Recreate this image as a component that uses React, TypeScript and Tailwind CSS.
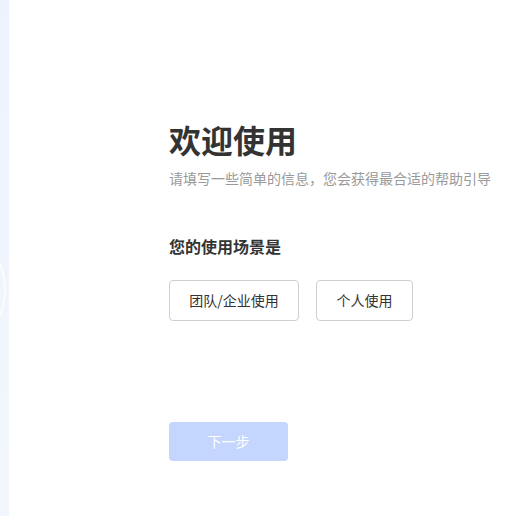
import React from "react";

const font = { fontFamily: '"Noto Sans CJK SC", "Noto Sans", sans-serif' };

export default function App() {
  return (
    <div className="flex h-[516px] w-full overflow-hidden bg-white" style={font}>
      <div className="relative h-full w-[9px] shrink-0 overflow-hidden bg-gradient-to-b from-[#edf2fd] via-[#f0f5fd] to-[#f3f7fd]">
        <div className="absolute left-[-150px] top-[222px] h-[136px] w-[156px] rounded-full border-[2px] border-white/70" />
      </div>
      <div className="flex flex-col pl-[160px] pt-[117px]">
        <h1 className="text-[32px] font-bold leading-[44px] text-[#333]">欢迎使用</h1>
        <p className="mt-[8px] text-[14px] leading-[18px] text-[#9a9a9a]">
          请填写一些简单的信息，您会获得最合适的帮助引导
        </p>
        <h2 className="mt-[48px] text-[16px] font-bold leading-[22px] text-[#333]">您的使用场景是</h2>
        <div className="mt-[23px] flex gap-[17px]">
          <button className="h-[41px] w-[130px] rounded-[4px] border border-[#cfcfcf] bg-white text-[14px] text-[#333]">
            团队/企业使用
          </button>
          <button className="h-[41px] w-[97px] rounded-[4px] border border-[#cfcfcf] bg-white text-[14px] text-[#333]">
            个人使用
          </button>
        </div>
        <button className="mt-[101px] h-[39px] w-[119px] rounded-[4px] bg-[#c4d6fd] text-[14px] text-white">
          下一步
        </button>
      </div>
    </div>
  );
}
